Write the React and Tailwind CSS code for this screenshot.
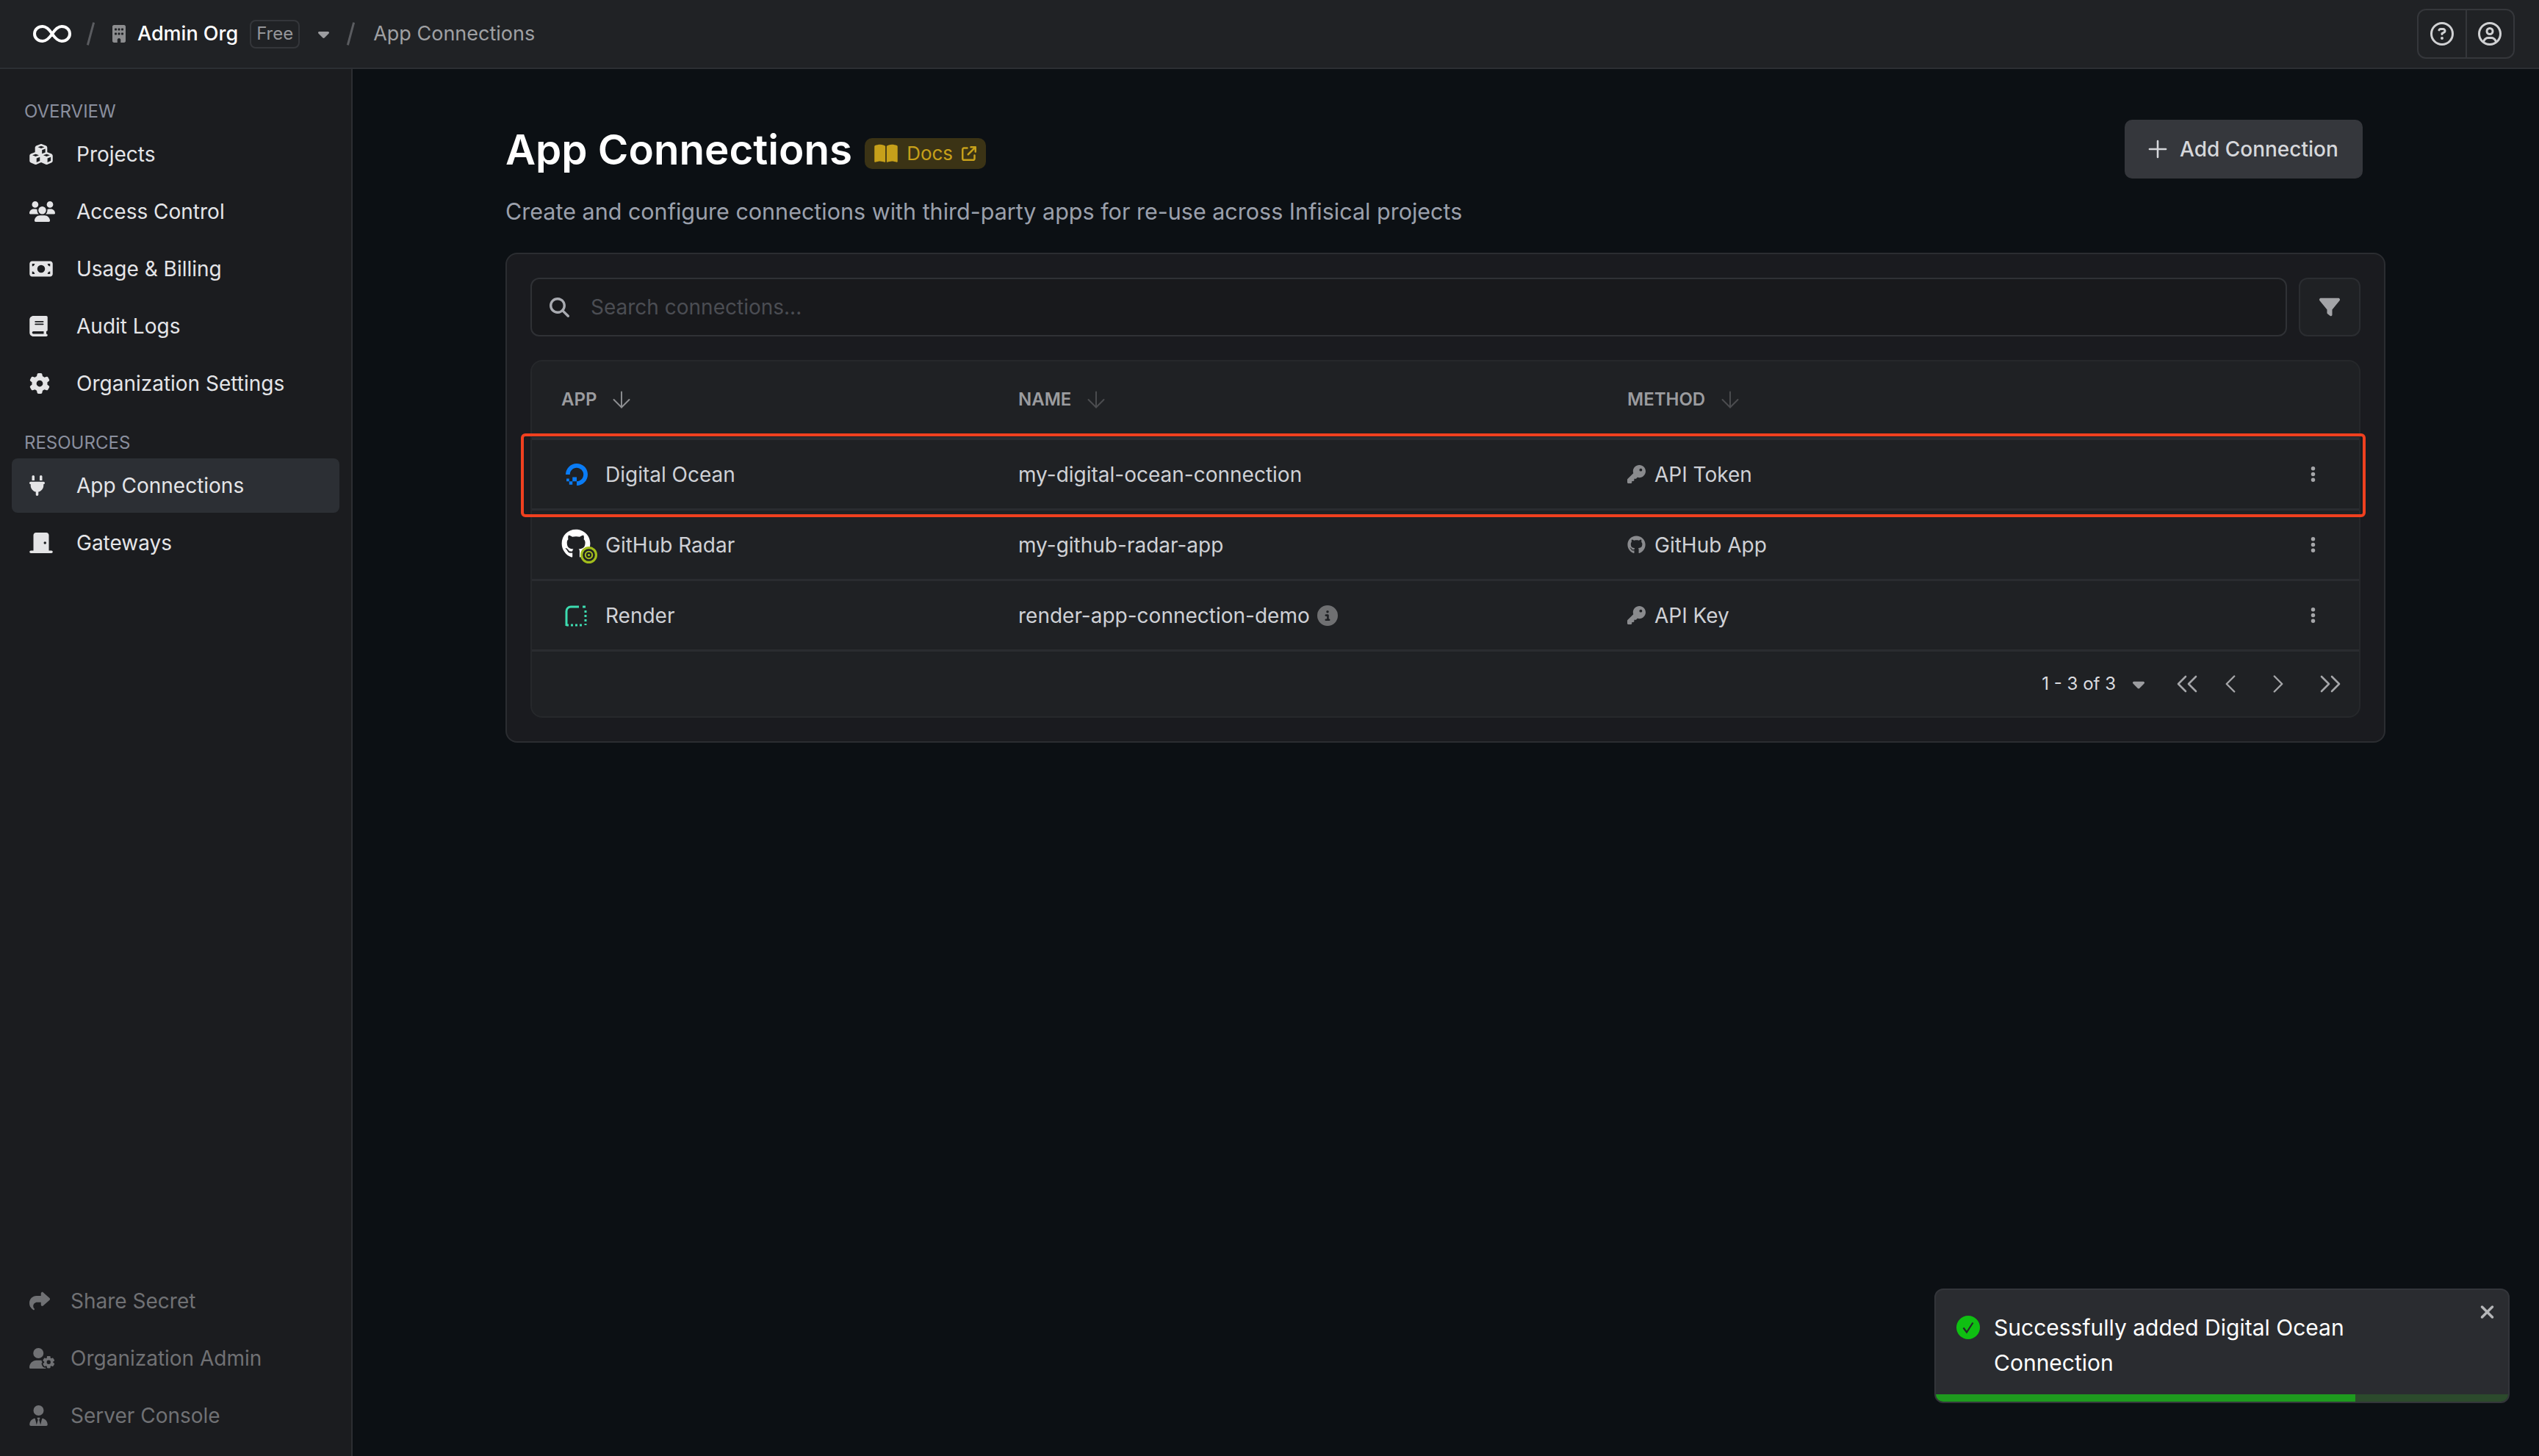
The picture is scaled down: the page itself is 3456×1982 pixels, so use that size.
import { ArrowDown, ChevronLeft, ChevronRight, ChevronsLeft, ChevronsRight, Plus } from "lucide-react";
import {
  FaArrowUpRightFromSquare,
  FaBookOpen,
  FaBook,
  FaBuilding,
  FaCaretDown,
  FaCircleInfo,
  FaCubes,
  FaDoorClosed,
  FaEllipsisVertical,
  FaFilter,
  FaGear,
  FaGithub,
  FaKey,
  FaMagnifyingGlass,
  FaMoneyBill,
  FaPlug,
  FaRegCircleQuestion,
  FaRegCircleUser,
  FaShare,
  FaUserGear,
  FaUserTie,
  FaUsers,
  FaXmark,
} from "react-icons/fa6";
import { SiDigitalocean } from "react-icons/si";

// react-icons render 1em x 1em, so wide glyphs need their width set by hand
const overviewItems = [
  { label: "Projects", icon: FaCubes, iconWidth: "w-[32px]" },
  { label: "Access Control", icon: FaUsers, iconWidth: "w-[35px]" },
  { label: "Usage & Billing", icon: FaMoneyBill, iconWidth: "w-[32px]" },
  { label: "Audit Logs", icon: FaBook, iconWidth: "w-[25px]" },
  { label: "Organization Settings", icon: FaGear, iconWidth: "w-[28px]" },
];

const bottomItems = [
  { label: "Share Secret", icon: FaShare, iconWidth: "w-[28px]" },
  { label: "Organization Admin", icon: FaUserGear, iconWidth: "w-[35px]" },
  { label: "Server Console", icon: FaUserTie, iconWidth: "w-[25px]" },
];

const InfinityLogo = () => (
  <svg viewBox="0 0 54 26" className="h-[26px] w-[54px]" fill="none" stroke="#fff" strokeWidth="4">
    <path d="M27 13c-4-6-8-10-13-10C8 3 3 7 3 13s5 10 11 10c5 0 9-4 13-10s8-10 13-10c6 0 11 4 11 10s-5 10-11 10c-5 0-9-4-13-10z" />
  </svg>
);

const RenderLogo = () => (
  <svg viewBox="0 0 30 30" className="h-[30px] w-[30px]" fill="none" stroke="#3ddcb0" strokeWidth="3">
    <path d="M2 29V9a6 6 0 0 1 6-6h11" />
    <path d="M24 3h4M28 8v3M28 14v3M28 20v3M28 26v2" />
    <path d="M2 28h3M8 28h3M14 28h3M20 28h3" />
  </svg>
);

const GithubRadarLogo = () => (
  <div className="relative h-[44px] w-[48px]">
    <div className="flex h-[40px] w-[40px] items-center justify-center">
      <FaGithub className="h-[40px] w-[40px] text-white" />
    </div>
    <svg viewBox="0 0 22 22" className="absolute bottom-[-3px] right-[-1px] h-[23px] w-[23px]" fill="none" stroke="#a2bd1c">
      <circle cx="11" cy="11" r="9.5" fill="#1f2124" strokeWidth="3" />
      <circle cx="11" cy="11" r="4.5" strokeWidth="2" />
      <circle cx="11" cy="11" r="1" fill="#a2bd1c" strokeWidth="1" />
    </svg>
  </div>
);

const SuccessCheck = () => (
  <svg viewBox="0 0 32 32" className="h-[32px] w-[32px] shrink-0">
    <circle cx="16" cy="16" r="16" fill="#0fbf12" />
    <path d="M9.5 16.5l4.5 6 8.5-13" fill="none" stroke="#24262a" strokeWidth="2.2" />
  </svg>
);

const NavItem = ({ label, icon: Icon, iconWidth, active }) => (
  <div className={`mx-[16px] flex h-[74px] items-center rounded-[8px] pl-[24px] ${active ? "bg-[#2c2f34]" : ""}`}>
    <div className="w-[64px] shrink-0">
      <Icon className={`h-[28px] text-[#e4e4e6] ${iconWidth}`} />
    </div>
    <span className="text-[28px] text-[#e4e5e8]">{label}</span>
  </div>
);

const BottomItem = ({ label, icon: Icon, iconWidth }) => (
  <div className="mx-[16px] flex h-[78px] items-center pl-[24px]">
    <div className="w-[56px] shrink-0">
      <Icon className={`h-[28px] text-[#707174] ${iconWidth}`} />
    </div>
    <span className="text-[28px] text-[#707174]">{label}</span>
  </div>
);

const SectionLabel = ({ children, className }) => (
  <div className={`pl-[33px] text-[24px] leading-[32px] text-[#8a8f9e] ${className}`}>{children}</div>
);

const ColumnHead = ({ label, width, arrow }) => (
  <div className={`flex items-center ${width}`}>
    <span className="text-[24px] font-semibold text-[#9b9c9f]">{label}</span>
    <ArrowDown strokeWidth={1.3} className={`ml-[16px] h-[36px] w-[36px] ${arrow}`} />
  </div>
);

const Row = ({ logo, app, name, method, methodIcon: MethodIcon, info }) => (
  <div className="flex h-[96px] items-center border-b-[3px] border-[#2a2c30] pl-[40px] pr-[50px] text-[28px] text-[#cfd1d6]">
    <div className="flex w-[622px] items-center">
      <div className="flex w-[60px] items-center justify-start">{logo}</div>
      <span>{app}</span>
    </div>
    <div className="flex w-[829px] items-center">
      <span>{name}</span>
      {info && <FaCircleInfo className="ml-[10px] text-[28px] text-[#6f7072]" />}
    </div>
    <div className="flex flex-1 items-center">
      <MethodIcon className="mr-[12px] text-[25px] text-[#8a8b8e]" />
      <span>{method}</span>
    </div>
    <FaEllipsisVertical className="text-[25px] text-[#a5a6a9]" />
  </div>
);

export default function App() {
  return (
    <div className="flex h-screen w-screen flex-col overflow-hidden bg-[#0c1014] font-['Inter',sans-serif]">
      {/* top bar */}
      <header className="flex h-[94px] shrink-0 items-center border-b-2 border-[#2c2f33] bg-[#202225] pl-[44px] pr-[33px]">
        <InfinityLogo />
        <span className="ml-[24px] mr-[20px] h-[32px] w-[3px] rotate-[15deg] bg-[#5a5c60]" />
        <FaBuilding className="ml-[8px] h-[24px] w-[18px] text-[#8c8d8f]" />
        <span className="ml-[16px] text-[27px] font-medium text-white">Admin Org</span>
        <span className="ml-[16px] flex h-[39px] w-[68px] items-center justify-center rounded-[8px] border-2 border-[#34363a] text-[24px] text-[#95969a]">
          Free
        </span>
        <FaCaretDown className="ml-[25px] h-[24px] w-[15px] text-[#9c9da0]" />
        <span className="ml-[28px] h-[32px] w-[3px] rotate-[15deg] bg-[#5a5c60]" />
        <span className="ml-[29px] text-[27px] text-[#9fa0a3]">App Connections</span>
        <div className="ml-auto flex h-[68px] w-[133px] rounded-[12px] border-2 border-[#35373b]">
          <div className="flex flex-1 items-center justify-center border-r-2 border-[#35373b]">
            <FaRegCircleQuestion className="text-[32px] text-[#d0d1d3]" />
          </div>
          <div className="flex flex-1 items-center justify-center">
            <FaRegCircleUser className="text-[32px] text-[#d0d1d3]" />
          </div>
        </div>
      </header>

      <div className="flex min-h-0 flex-1">
        {/* sidebar */}
        <aside className="flex w-[480px] shrink-0 flex-col border-r-2 border-[#2c2e32] bg-[#1b1c1f] pt-[42px]">
          <SectionLabel className="mb-[5px]">OVERVIEW</SectionLabel>
          <div className="flex flex-col gap-[4px]">
            {overviewItems.map((item) => (
              <NavItem key={item.label} {...item} />
            ))}
          </div>
          <SectionLabel className="mb-[5px] mt-[28px]">RESOURCES</SectionLabel>
          <div className="flex flex-col gap-[4px]">
            <NavItem label="App Connections" icon={FaPlug} iconWidth="w-[21px]" active />
            <NavItem label="Gateways" icon={FaDoorClosed} iconWidth="w-[32px]" />
          </div>
          <div className="mt-auto flex flex-col pb-[16px]">
            {bottomItems.map((item) => (
              <BottomItem key={item.label} {...item} />
            ))}
          </div>
        </aside>

        {/* main */}
        <main className="relative min-w-0 flex-1 pl-[208px] pr-[209px] pt-[69px]">
          <div className="flex items-start justify-between pr-[31px]">
            <div>
              <div className="flex h-[80px] items-center">
                <h1 className="mt-[2px] text-[56.5px] font-semibold leading-[80px] text-white">App Connections</h1>
                <a className="ml-[17px] mt-[11px] flex h-[42px] w-[165px] items-center justify-center gap-[12px] rounded-[10px] bg-[#3b3315] text-[26px] text-[#c6a01a]">
                  <FaBookOpen className="h-[28px] w-[32px]" />
                  <span className="leading-none">Docs</span>
                  <FaArrowUpRightFromSquare className="text-[20px]" />
                </a>
              </div>
              <p className="mt-[21px] text-[30.5px] leading-[48px] text-[#9ba0ac]">
                Create and configure connections with third-party apps for re-use across Infisical projects
              </p>
            </div>
            <button className="flex h-[80px] w-[324px] items-center justify-start gap-[11px] rounded-[10px] bg-[#35373c] pl-[26px] text-[28px] font-medium text-[#d6d7db]">
              <Plus strokeWidth={1.6} className="h-[38px] w-[38px]" />
              Add Connection
            </button>
          </div>

          <section className="mt-[32px] rounded-[16px] border-2 border-[#2b2d31] bg-[#1a1b1f] p-[32px]">
            <div className="flex gap-[16px]">
              <div className="flex h-[80px] flex-1 items-center rounded-[12px] border-2 border-[#2f3135] bg-[#18191c] pl-[24px]">
                <FaMagnifyingGlass className="text-[27px] text-[#a9abb1]" />
                <span className="ml-[29px] text-[28px] text-[#4b4d53]">Search connections...</span>
              </div>
              <button className="flex h-[80px] w-[84px] items-center justify-center rounded-[12px] border-2 border-[#2b2d31] bg-[#1f2124]">
                <FaFilter className="text-[28px] text-[#a3a4a7]" />
              </button>
            </div>

            <div className="mt-[32px] rounded-[16px] border-2 border-[#26282b] bg-[#1f2124]">
              <div className="flex h-[107px] items-center border-b-[4px] border-[#2c2e33] pl-[40px]">
                <ColumnHead label="APP" width="w-[622px]" arrow="text-[#8e8f92]" />
                <ColumnHead label="NAME" width="w-[829px]" arrow="text-[#4c4d50]" />
                <ColumnHead label="METHOD" arrow="text-[#4c4d50]" />
              </div>
              <Row
                logo={<SiDigitalocean className="ml-[6px] text-[30px] text-[#0a7cf5]" />}
                app="Digital Ocean"
                name="my-digital-ocean-connection"
                method="API Token"
                methodIcon={FaKey}
              />
              <Row
                logo={<GithubRadarLogo />}
                app="GitHub Radar"
                name="my-github-radar-app"
                method="GitHub App"
                methodIcon={FaGithub}
              />
              <Row
                logo={<div className="ml-[5px]"><RenderLogo /></div>}
                app="Render"
                name="render-app-connection-demo"
                method="API Key"
                methodIcon={FaKey}
                info
              />
              <div className="flex h-[88px] items-center justify-end pr-[15px] text-[#dcdde0]">
                <span className="text-[24px]">1 - 3 of 3</span>
                <FaCaretDown className="ml-[23px] h-[26px] w-[16px] text-[#9c9da0]" />
                <ChevronsLeft strokeWidth={1.3} className="ml-[34px] h-[48px] w-[48px] text-[#a5a6a9]" />
                <ChevronLeft strokeWidth={1.4} className="ml-[14px] h-[42px] w-[42px] text-[#a5a6a9]" />
                <ChevronRight strokeWidth={1.4} className="ml-[23px] h-[42px] w-[42px] text-[#a5a6a9]" />
                <ChevronsRight strokeWidth={1.3} className="ml-[26px] h-[48px] w-[48px] text-[#a5a6a9]" />
              </div>
            </div>
          </section>

          {/* red highlight drawn on top of the first row */}
          <div className="pointer-events-none absolute left-[229px] top-[496px] h-[114px] w-[2511px] rounded-[6px] border-[4px] border-[#f0401f]" />
        </main>
      </div>

      {/* toast */}
      <div className="fixed left-[2633px] top-[1754px] flex h-[156px] w-[783px] flex-col overflow-hidden rounded-[12px] border-2 border-[#33353a] bg-[#2a2c30]">
        <div className="flex flex-1 items-start pl-[28px] pr-[18px] pt-[35px]">
          <SuccessCheck />
          <p className="ml-[19px] mt-[-8px] w-[560px] text-[30px] leading-[48px] text-white">
            Successfully added Digital Ocean Connection
          </p>
          <FaXmark className="ml-auto mt-[-19px] h-[28px] w-[21px] text-[#b5b6b8]" />
        </div>
        <div className="flex h-[10px] shrink-0 bg-[#2c4a2c]">
          <div className="h-full w-[571px] bg-[#1e9a1e]" />
        </div>
      </div>
    </div>
  );
}
